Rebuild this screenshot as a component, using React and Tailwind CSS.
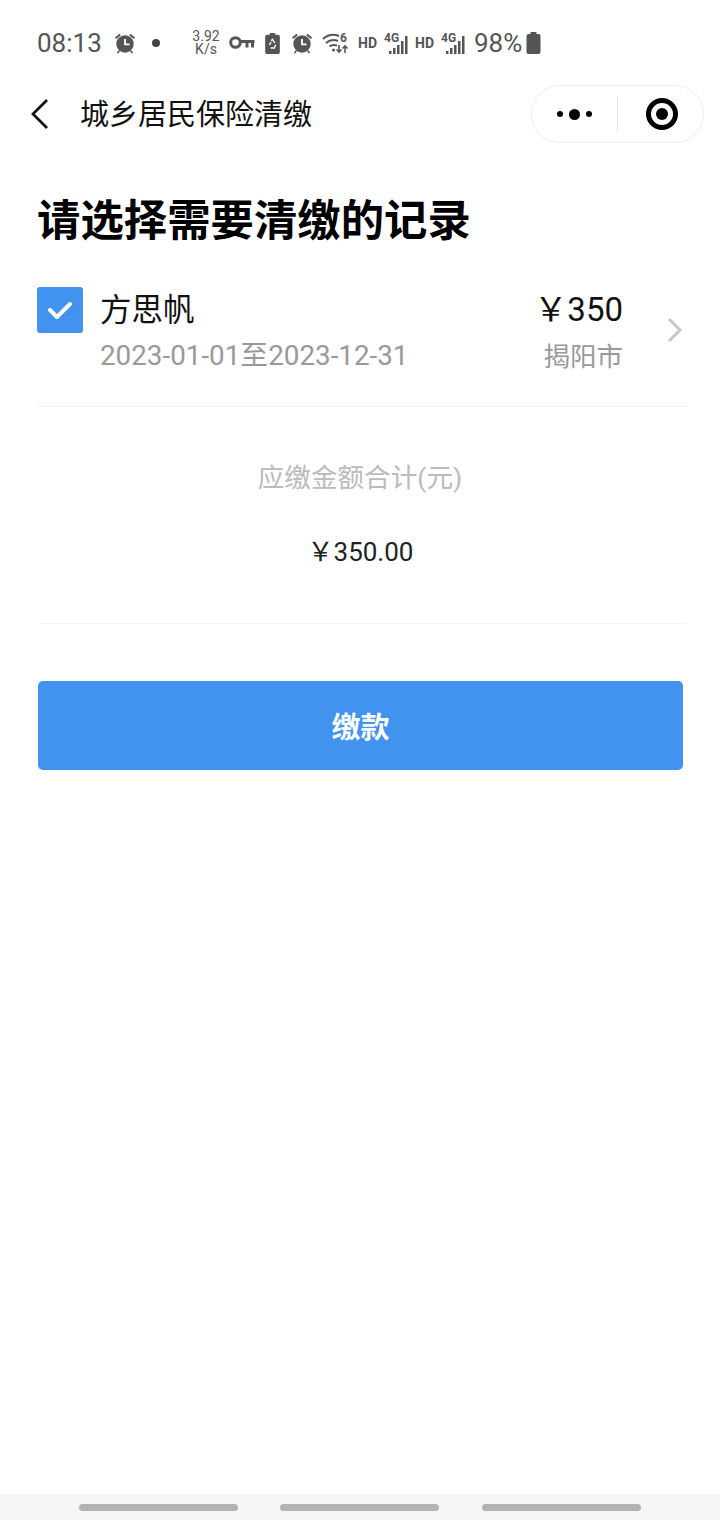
const cjk = "font-['Roboto','Noto_Sans_CJK_SC',sans-serif]"

const AlarmIcon = () => (
  <svg width="22" height="22" viewBox="0 0 24 24" fill="#555">
    <circle cx="12" cy="13" r="9.500" />
    <path d="M1 6l5-4 1.500 1.500-5 4zM23 6l-5-4-1.500 1.500 5 4zM5 20l-2 3 1.500 .5 2.500-3zM19 20l2 3-1.500 .5-2.500-3z" />
    <path d="M12 7.500v6h5" fill="none" stroke="#fff" strokeWidth="2" />
  </svg>
)

const KeyIcon = () => (
  <svg width="26" height="14" viewBox="0 0 26 14" fill="none" stroke="#555" strokeWidth="3">
    <circle cx="6.500" cy="6.500" r="4.800" />
    <path d="M11 5.500h14.500M18 5.500v6M23.500 5.500v6" />
  </svg>
)

const RecycleBattery = () => (
  <svg width="15" height="22" viewBox="0 0 16 24">
    <path d="M5 1h6v2h3a2 2 0 0 1 2 2v17a2 2 0 0 1-2 2H2a2 2 0 0 1-2-2V5a2 2 0 0 1 2-2h3z" fill="#555" />
    <path d="M6.500 9.500L8 8l2.500 4M11.500 14l-1.500 3.500H6M4.500 14l2-3" fill="none" stroke="#fff" strokeWidth="1.500" />
  </svg>
)

const WifiIcon = () => (
  <svg width="27" height="24" viewBox="0 0 27 24" fill="none" stroke="#555" strokeWidth="2">
    <path d="M1 8c5-4.500 11-5 16-3M4 12c3.500-3 8-3.500 12-2M7.500 15.500c2-1.500 5-2 7.500-1" />
    <circle cx="11.500" cy="19" r="1.500" fill="#555" stroke="none" />
    <path d="M17 14v7M14.500 18.500l2.500 2.500 2.500-2.500M23 22v-7M20.500 17.500l2.500-2.500 2.500 2.500" strokeWidth="1.600" />
    <text x="18" y="11" fontSize="12" fontWeight="700" fill="#555" stroke="none" fontFamily="Roboto, sans-serif">6</text>
  </svg>
)

const Signal = () => (
  <div className="relative h-[24px] w-[25px]">
    <span className="absolute left-0 top-[1px] text-[12px] leading-[12px] font-bold text-[#555] font-['Roboto',sans-serif]">4G</span>
    <svg className="absolute left-0 top-0" width="25" height="24" viewBox="0 0 25 24" fill="#555">
      <rect x="5" y="20" width="2.500" height="3" />
      <rect x="9" y="17" width="2.500" height="6" />
      <rect x="13" y="14" width="2.500" height="9" />
      <rect x="17" y="10" width="2.500" height="13" />
      <rect x="21" y="5" width="2.500" height="18" />
    </svg>
  </div>
)

const Hd = () => (
  <span className="w-[18px] text-[14px] leading-none font-bold text-[#555] font-['Roboto',sans-serif]">HD</span>
)

const StatusBar = () => (
  <div className="flex h-[85px] items-center pl-[37px] pt-[1px] font-['Roboto',sans-serif] text-[#555]">
    <span className="w-[65px] text-[26px] leading-none">08:13</span>
    <div className="ml-[12px]"><AlarmIcon /></div>
    <span className="ml-[16px] h-[8px] w-[8px] rounded-full bg-[#444]" />
    <div className="ml-[32px] flex w-[28px] flex-col items-center text-[14px] leading-[13px]">
      <span>3.92</span>
      <span>K/s</span>
    </div>
    <div className="ml-[9px]"><KeyIcon /></div>
    <div className="ml-[10px]"><RecycleBattery /></div>
    <div className="ml-[11px]"><AlarmIcon /></div>
    <div className="ml-[9px]"><WifiIcon /></div>
    <div className="ml-[9px] flex items-center gap-[8px]">
      <Hd />
      <Signal />
    </div>
    <div className="ml-[6px] flex items-center gap-[8px]">
      <Hd />
      <Signal />
    </div>
    <span className="ml-[8px] w-[48px] text-[26px] leading-none">98%</span>
    <svg className="ml-[4px] shrink-0" width="15" height="22" viewBox="0 0 15 22" fill="#555">
      <path d="M4.500 0h6v2h2a2 2 0 0 1 2 2v16a2 2 0 0 1-2 2h-10a2 2 0 0 1-2-2V4a2 2 0 0 1 2-2h2z" />
    </svg>
  </div>
)

const NavBar = () => (
  <div className="flex h-[58px] items-center justify-between pl-[31px] pr-[16px]">
    <div className="flex items-center">
      <svg width="18" height="32" viewBox="0 0 18 32" fill="none" stroke="#111" strokeWidth="2.800">
        <path d="M16 2L2 16l14 14" />
      </svg>
      <span className={`ml-[31px] pt-[3px] text-[29px] leading-none text-[#111] ${cjk}`}>城乡居民保险清缴</span>
    </div>
    <div className="flex h-[58px] w-[173px] items-center rounded-full border border-[#eeeeee] bg-white">
      <div className="flex w-[85px] items-center justify-center gap-[6px]">
        <span className="h-[6px] w-[6px] rounded-full bg-black" />
        <span className="h-[11px] w-[11px] rounded-full bg-black" />
        <span className="h-[6px] w-[6px] rounded-full bg-black" />
      </div>
      <div className="h-[36px] w-px bg-[#e8e8e8]" />
      <div className="flex flex-1 items-center justify-center pl-[2px]">
        <div className="flex h-[32px] w-[32px] items-center justify-center rounded-full border-[5px] border-black">
          <span className="h-[12px] w-[12px] rounded-full bg-black" />
        </div>
      </div>
    </div>
  </div>
)

const RecordRow = () => (
  <div className="ml-[37px] mr-[33px] flex h-[135px] items-start border-b border-[#f2f2f2] pt-[15px]">
    <div className="flex h-[46px] w-[46px] items-center justify-center rounded-[3px] bg-[#4193ef]">
      <svg width="26" height="20" viewBox="0 0 26 20" fill="none" stroke="#fff" strokeWidth="4" strokeLinecap="round" strokeLinejoin="round">
        <path d="M3 10l7 7L23 4" />
      </svg>
    </div>
    <div className="ml-[17px] mt-[2px] flex-1">
      <div className={`text-[31.500px] leading-[44px] text-[#111] ${cjk}`}>方思帆</div>
      <div className={`mt-[4px] text-[27.800px] leading-[38px] text-[#999] ${cjk}`}>2023-01-01至2023-12-31</div>
    </div>
    <div className={`mt-[1px] flex flex-col items-end ${cjk}`}>
      <div className="text-[33px] leading-[44px] text-[#111]">￥350</div>
      <div className="mt-[6px] text-[26.500px] leading-[38px] text-[#999]">揭阳市</div>
    </div>
    <svg className="ml-[43px] mr-[3px] mt-[30px]" width="18" height="26" viewBox="0 0 18 26" fill="none" stroke="#c8c8c8" strokeWidth="3">
      <path d="M3 2l11 11L3 24" />
    </svg>
  </div>
)

const TotalBlock = () => (
  <div className={`ml-[40px] mr-[35px] flex h-[217px] flex-col items-center border-b border-[#f4f4f4] pt-[52px] ${cjk}`}>
    <div className="mr-[5px] text-[26.600px] leading-[38px] text-[#bbb]">应缴金额合计(元)</div>
    <div className="mr-[4px] mt-[36px] text-[26px] leading-[38px] text-[#222]">￥350.00</div>
  </div>
)

export default function App() {
  return (
    <div className="flex h-[1520px] w-[720px] flex-col overflow-hidden bg-white">
      <StatusBar />
      <NavBar />
      <h1 className={`ml-[37px] mb-[24px] mt-[53px] text-[43.400px] leading-[52px] font-bold text-black ${cjk}`}>请选择需要清缴的记录</h1>
      <RecordRow />
      <TotalBlock />
      <button className={`ml-[38px] mt-[57px] h-[89px] w-[645px] rounded-[5px] bg-[#4193ef] pt-[6px] text-[29px] font-bold text-white ${cjk}`}>
        缴款
      </button>
      <div className="mt-auto flex h-[26px] items-start gap-[42px] bg-[#f6f6f6] pl-[79px] pt-[10px]">
        <span className="h-[7px] w-[159px] rounded-full bg-[#b3b3b3]" />
        <span className="h-[7px] w-[159px] rounded-full bg-[#b3b3b3]" />
        <span className="ml-[1px] h-[7px] w-[159px] rounded-full bg-[#b3b3b3]" />
      </div>
    </div>
  )
}
